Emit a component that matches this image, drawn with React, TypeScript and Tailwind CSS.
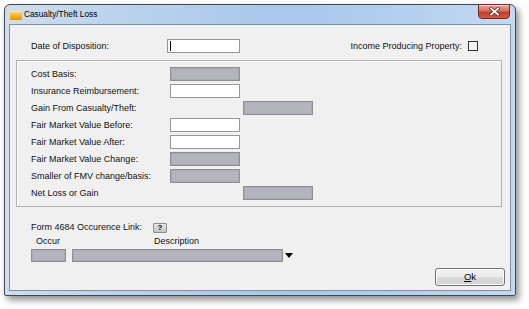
import React from "react";

const font = { fontFamily: '"Liberation Sans", Arial, sans-serif' };

function GrayBox({ w = 70, h = 14 }: { w?: number; h?: number }) {
  return (
    <div
      className="border border-[#8e8e96] bg-[#b4b4bc] shadow-[inset_0_0_0_1px_#a9a9b1]"
      style={{ width: w, height: h }}
    />
  );
}

function WhiteBox({ w = 70, h = 14, caret = false }: { w?: number; h?: number; caret?: boolean }) {
  return (
    <div
      className="border border-[#969696] bg-white flex items-center pl-[2px]"
      style={{ width: w, height: h }}
    >
      {caret && <div className="w-[1px] h-[10px] bg-black" />}
    </div>
  );
}

type Row = { label: string; col: 1 | 2; kind: "gray" | "white" };

const rows: Row[] = [
  { label: "Cost Basis:", col: 1, kind: "gray" },
  { label: "Insurance Reimbursement:", col: 1, kind: "white" },
  { label: "Gain From Casualty/Theft:", col: 2, kind: "gray" },
  { label: "Fair Market Value Before:", col: 1, kind: "white" },
  { label: "Fair Market Value After:", col: 1, kind: "white" },
  { label: "Fair Market Value Change:", col: 1, kind: "gray" },
  { label: "Smaller of FMV change/basis:", col: 1, kind: "gray" },
  { label: "Net Loss or Gain", col: 2, kind: "gray" },
];

export default function App() {
  return (
    <div className="w-[529px] h-[309px] bg-white overflow-hidden" style={font}>
      <div className="ml-[4px] mt-[4px] w-[512px] h-[292px] relative flex flex-col border border-[#3f4a57] rounded-t-[6px] rounded-b-[2px] bg-[linear-gradient(90deg,#d3dde8_0%,#bcd3ec_20%,#a9c7ea_55%,#b5d0ef_80%,#c3d9f1_100%)] shadow-[3px_4px_7px_rgba(0,0,0,0.45)]">
        {/* title bar */}
        <div className="h-[19px] flex items-center pl-[5px]">
          <div className="w-[12px] h-[9px] mt-[1px] rounded-[1px] bg-[linear-gradient(180deg,#ffd36a_0%,#f7a91c_60%,#e8900a_100%)] border-t border-[#ffe7a8]" />
          <span className="ml-[2px] text-[8.3px] text-black leading-none">Casualty/Theft Loss</span>
        </div>
        <div className="absolute right-[5px] top-[-1px] w-[32px] h-[15px] rounded-b-[4px] border border-[#6f2d25] bg-[linear-gradient(180deg,#eaa396_0%,#d5715f_45%,#c1402c_55%,#cf5a45_100%)] flex items-center justify-center shadow-[inset_0_1px_0_rgba(255,255,255,0.5)]">
          <svg width="11" height="9" viewBox="0 0 11 9">
            <path d="M2 1.5 L9 7.5 M9 1.5 L2 7.5" stroke="#5a2a24" strokeWidth="3.2" strokeLinecap="square" />
            <path d="M2 1.5 L9 7.5 M9 1.5 L2 7.5" stroke="#ffffff" strokeWidth="1.7" strokeLinecap="square" />
          </svg>
        </div>

        {/* body */}
        <div className="flex-1 px-[4px] pb-[4px] flex">
          <div className="flex-1 border border-[#7f90a4] bg-[#f0f0f0] flex flex-col text-[9px] text-[#111] leading-none">
            {/* date row */}
            <div className="mt-[14px] h-[14px] flex items-center pl-[21px] pr-[32px]">
              <div className="w-[136px]">Date of Disposition:</div>
              <WhiteBox w={73} h={14} caret />
              <div className="flex-1" />
              <div>Income Producing Property:</div>
              <div className="ml-[6px] w-[10px] h-[10px] border border-[#333] bg-[#f4f4f4]" />
            </div>

            {/* group */}
            <div className="mt-[7px] ml-[6px] mr-[8px] h-[147px] border border-[#b0b0b0] shadow-[inset_1px_1px_0_#ffffff] pt-[6px] pl-[14px] flex flex-col gap-[3px]">
              {rows.map((r) => (
                <div key={r.label} className="h-[14px] flex items-center">
                  <div className="w-[139px]">{r.label}</div>
                  {r.col === 2 && <div className="w-[73px]" />}
                  {r.kind === "gray" ? <GrayBox /> : <WhiteBox />}
                </div>
              ))}
            </div>

            {/* form 4684 */}
            <div className="mt-[15px] h-[11px] flex items-center pl-[21px]">
              <div className="w-[122px]">Form 4684 Occurence Link:</div>
              <div className="w-[14px] h-[10px] rounded-[1px] border border-[#8c8c8c] bg-[linear-gradient(180deg,#e6e6e6,#c4c4c4)] flex items-center justify-center text-[8px] font-bold text-black">
                ?
              </div>
            </div>
            <div className="mt-[3px] h-[10px] flex items-center">
              <div className="pl-[26px] w-[144px]">Occur</div>
              <div>Description</div>
            </div>
            <div className="mt-[3px] h-[13px] flex items-center pl-[21px]">
              <GrayBox w={35} h={13} />
              <div className="ml-[6px]">
                <GrayBox w={211} h={13} />
              </div>
              <svg className="ml-[2px]" width="8" height="5" viewBox="0 0 8 5">
                <path d="M0 0 H8 L4 5 Z" fill="#000" />
              </svg>
            </div>

            {/* ok */}
            <div className="mt-[6px] flex justify-end pr-[5px]">
              <div className="w-[70px] h-[18px] rounded-[3px] border border-[#707070] bg-[linear-gradient(180deg,#f2f2f2_0%,#ebebeb_50%,#dddddd_51%,#cfcfcf_100%)] shadow-[inset_0_0_0_1px_#fcfcfc] flex items-center justify-center text-[9.5px] text-black">
                <span>
                  <span className="underline">O</span>k
                </span>
              </div>
            </div>
          </div>
        </div>
      </div>
    </div>
  );
}
